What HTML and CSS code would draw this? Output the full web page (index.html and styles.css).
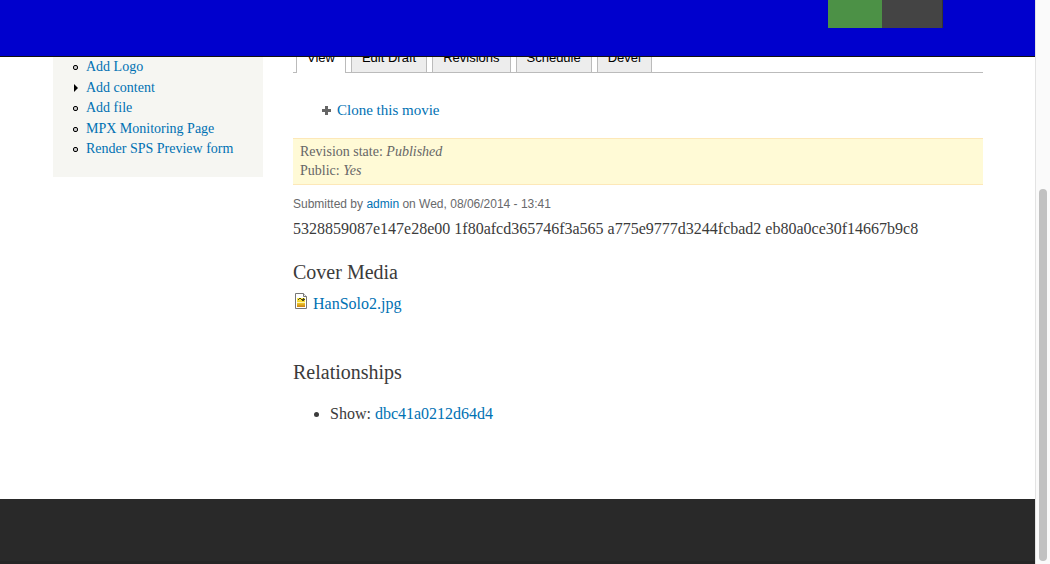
FILE: index.html
```html
<!DOCTYPE html>
<html lang="en">
<head>
<meta charset="utf-8">
<title>Movie</title>
<link rel="stylesheet" href="styles.css">
</head>
<body>
<div class="viewport">
  <div class="page">
    <header class="toolbar">
      <div class="status"><span class="status-on"></span><span class="status-off"></span></div>
    </header>
    <div class="columns">
      <nav class="sidebar">
        <ul class="menu">
          <li class="leaf"><a href="#">Add Logo</a></li>
          <li class="collapsed"><a href="#">Add content</a></li>
          <li class="leaf"><a href="#">Add file</a></li>
          <li class="leaf"><a href="#">MPX Monitoring Page</a></li>
          <li class="leaf"><a href="#">Render SPS Preview form</a></li>
        </ul>
      </nav>
      <main class="content">
        <nav class="tabs">
          <a class="tab active" href="#">View</a>
          <a class="tab" href="#">Edit Draft</a>
          <a class="tab" href="#">Revisions</a>
          <a class="tab" href="#">Schedule</a>
          <a class="tab" href="#">Devel</a>
        </nav>
        <div class="action">
          <svg class="plus" width="9" height="9" viewBox="0 0 9 9" aria-hidden="true"><path d="M3 0h3v3h3v3H6v3H3V6H0V3h3z" fill="#666"/></svg>
          <a href="#">Clone this movie</a>
        </div>
        <div class="revision">
          <div>Revision state: <em>Published</em></div>
          <div>Public: <em>Yes</em></div>
        </div>
        <div class="submitted">Submitted by <a href="#">admin</a> on Wed, 08/06/2014 - 13:41</div>
        <div class="guid">5328859087e147e28e00 1f80afcd365746f3a565 a775e9777d3244fcbad2 eb80a0ce30f14667b9c8</div>
        <section class="field">
          <h2>Cover Media</h2>
          <div class="file">
            <svg width="16" height="16" viewBox="0 0 16 16" aria-hidden="true">
              <defs><linearGradient id="photo" x1="0" y1="0" x2="0" y2="1"><stop offset="0" stop-color="#fff04a"/><stop offset=".5" stop-color="#f5d32d"/><stop offset="1" stop-color="#c98012"/></linearGradient></defs>
              <path d="M2.5.5h8l3 3v12h-11z" fill="#fff" stroke="#777"/>
              <path d="M10.500.5v3h3" fill="#eee" stroke="#777"/>
              <path d="M4 5h8v9H4z" fill="url(#photo)"/>
              <path d="M5 6h1V5h2v1H6v1H5zM8 6h2V5h1v1h1v1h-1v1H9V7H8z" fill="#514718"/>
              <path d="M4 9h8v1H4z" fill="#fff6b0"/>
            </svg>
            <a href="#">HanSolo2.jpg</a>
          </div>
        </section>
        <section class="field relationships">
          <h2>Relationships</h2>
          <ul class="relations"><li>Show: <a href="#">dbc41a0212d64d4</a></li></ul>
        </section>
      </main>
    </div>
    <footer class="footer"></footer>
  </div>
  <div class="scrollbar" aria-hidden="true"><div class="thumb"></div></div>
</div>
</body>
</html>
```
FILE: styles.css
```css
*, *::before { box-sizing: border-box; }
body {
  margin: 0;
  background: #fff;
  color: #3b3b3b;
  font-family: Georgia, "Liberation Serif", serif;
  font-size: 16px;
  line-height: 24px;
}
a { color: #0071b3; text-decoration: none; }
h2 { margin: 0; font-size: 20px; font-weight: 400; line-height: 24px; }
ul { margin: 0; padding: 0; }

.viewport { display: grid; grid-template-columns: 1fr 15px; min-height: 100vh; }
.page { position: relative; display: flex; flex-direction: column; }

.toolbar {
  position: absolute;
  inset: 0 0 auto;
  height: 57px;
  padding-right: 92px;
  display: flex;
  justify-content: flex-end;
  align-items: flex-start;
  background: #0000cd;
  border-bottom: 1px solid #111;
}
.status { display: flex; height: 28px; }
.status-on { width: 54px; background: #4c9146; }
.status-off { width: 61px; background: #444; border-right: 1px solid #333; }

.columns { display: flex; align-items: flex-start; gap: 30px; padding: 44px 52px 73px 53px; }
.sidebar {
  flex: 0 0 210px;
  padding: 13px 15px 17px 33px;
  background: #f6f6f2;
  font-size: 14px;
}
.menu { display: grid; grid-auto-rows: 1fr; min-height: 103px; list-style: none; }
.menu li { position: relative; line-height: 20px; }
.menu li::before { content: ""; position: absolute; top: 8px; left: -13px; }
.leaf::before { width: 5px; height: 5px; border: 1px solid #000; border-radius: 2px; background: #ccc; }
.collapsed::before { border: solid transparent; border-width: 4px 0 4px 4px; border-left-color: #000; }
.menu .collapsed::before { top: 6px; left: -12px; }

.content { flex: 1; min-width: 0; }
.tabs {
  display: flex;
  gap: 5px;
  padding-left: 3px;
  border-bottom: 1px solid #bbb;
  font-family: "Liberation Sans", Arial, sans-serif;
  font-size: 13px;
}
.tab {
  height: 28px;
  padding: 0 10px;
  line-height: 26px;
  color: #000;
  background: #ededed;
  border: solid #bbb;
  border-width: 1px 1px 0;
}
.tab.active { margin-bottom: -1px; height: 29px; background: #fff; }

.action { display: flex; align-items: center; gap: 6px; padding: 25px 0 16px 29px; font-size: 15px; }
.revision {
  padding: 3px 7px 4px;
  background: #fffad6;
  border: solid #fde8b8;
  border-width: 1px 0;
  color: #666;
  font-size: 14px;
  line-height: 19px;
}
.submitted {
  padding-top: 7px;
  color: #68696b;
  font-family: "Liberation Sans", Arial, sans-serif;
  font-size: 12px;
}
.guid { padding-top: 1px; }
.field { padding-top: 19px; }
.file { display: flex; align-items: flex-start; gap: 4px; padding-top: 8px; }
.file svg { margin-top: 1px; }
.relationships { padding-top: 44px; }
.relations { padding: 18px 0 0 37px; }

.footer { flex: 1; min-height: 64px; background: #292929; border-bottom: 3px solid #252525; }

.scrollbar { display: grid; padding: 189px 3px 3px; background: #fafafa; border-left: 1px solid #e3e3e3; }
.thumb { border-radius: 4px; background: #c1c1c1; }
```
